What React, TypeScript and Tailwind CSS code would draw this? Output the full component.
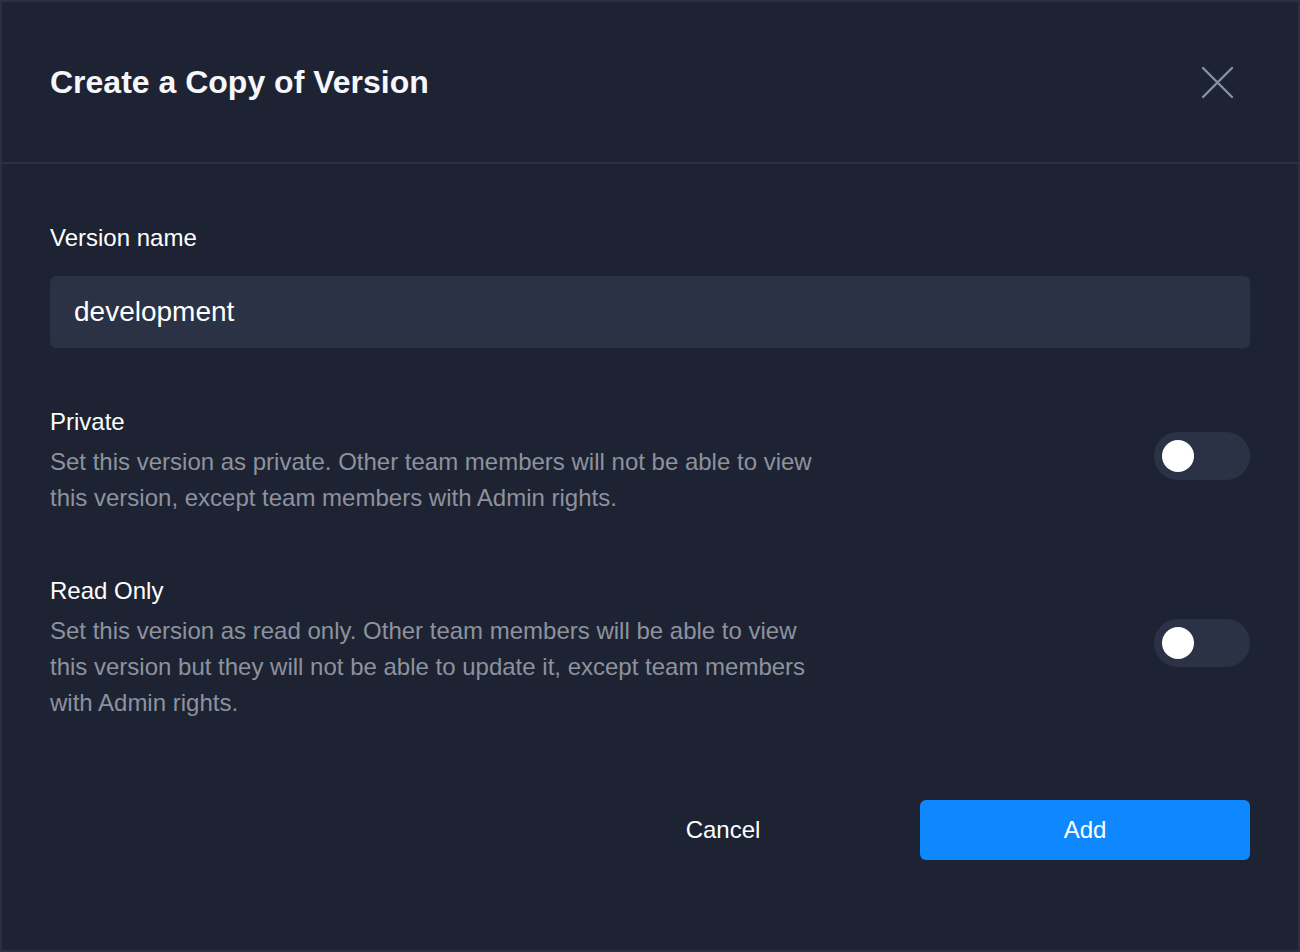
import React, { useState } from 'react';

const Toggle: React.FC<{ on: boolean; onChange: () => void }> = ({ on, onChange }) => (
  <button
    type="button"
    onClick={onChange}
    className={`flex h-[48px] w-[96px] shrink-0 items-center rounded-full px-[8px] mb-[10px] ${
      on ? 'bg-[#0f88ff] justify-end' : 'bg-[#2c3245] justify-start'
    }`}
  >
    <span className="block h-[32px] w-[32px] rounded-full bg-white" />
  </button>
);

const App: React.FC = () => {
  const [isPrivate, setPrivate] = useState(false);
  const [readOnly, setReadOnly] = useState(false);

  return (
    <div
      className="h-[952px] w-[1300px] border-2 border-[#2a3042] bg-[#1e2334] text-white"
      style={{ fontFamily: '"Liberation Sans", Arial, sans-serif' }}
    >
      <div className="flex h-[162px] items-center justify-between border-b-2 border-[#2a3042] pl-[48px] pr-[64px]">
        <h1 className="text-[32px] font-bold leading-none text-[#f5f7fa]">Create a Copy of Version</h1>
        <button type="button" className="text-[#8a90a3]" aria-label="Close">
          <svg width="33" height="33" viewBox="0 0 33 33" fill="none" stroke="currentColor" strokeWidth={2.4} strokeLinecap="round">
            <path d="M2 2L31 31M31 2L2 31" />
          </svg>
        </button>
      </div>

      <div className="px-[48px] pt-[58px]">
        <label className="block text-[24px] leading-[32px]">Version name</label>
        <input
          defaultValue="development"
          className="mt-[22px] h-[72px] w-full rounded-[6px] bg-[#2c3245] px-[24px] text-[28px] text-white outline-none"
        />

        <div className="mt-[58px] flex items-center justify-between">
          <div className="w-[780px]">
            <div className="text-[24px] leading-[32px]">Private</div>
            <p className="mt-[6px] text-[24px] leading-[36px] text-[#8d929d]">
              Set this version as private. Other team members will not be able to view this version, except team
              members with Admin rights.
            </p>
          </div>
          <Toggle on={isPrivate} onChange={() => setPrivate(!isPrivate)} />
        </div>

        <div className="mt-[59px] flex items-center justify-between">
          <div className="w-[780px]">
            <div className="text-[24px] leading-[32px]">Read Only</div>
            <p className="mt-[6px] text-[24px] leading-[36px] text-[#8d929d]">
              Set this version as read only. Other team members will be able to view this version but they will not be
              able to update it, except team members with Admin rights.
            </p>
          </div>
          <Toggle on={readOnly} onChange={() => setReadOnly(!readOnly)} />
        </div>

        <div className="mt-[79px] flex justify-end gap-[32px]">
          <button type="button" className="h-[60px] w-[330px] rounded-[6px] text-[24px] text-white">
            Cancel
          </button>
          <button type="button" className="h-[60px] w-[330px] rounded-[6px] bg-[#0f88ff] text-[24px] text-white">
            Add
          </button>
        </div>
      </div>
    </div>
  );
};

export default App;
